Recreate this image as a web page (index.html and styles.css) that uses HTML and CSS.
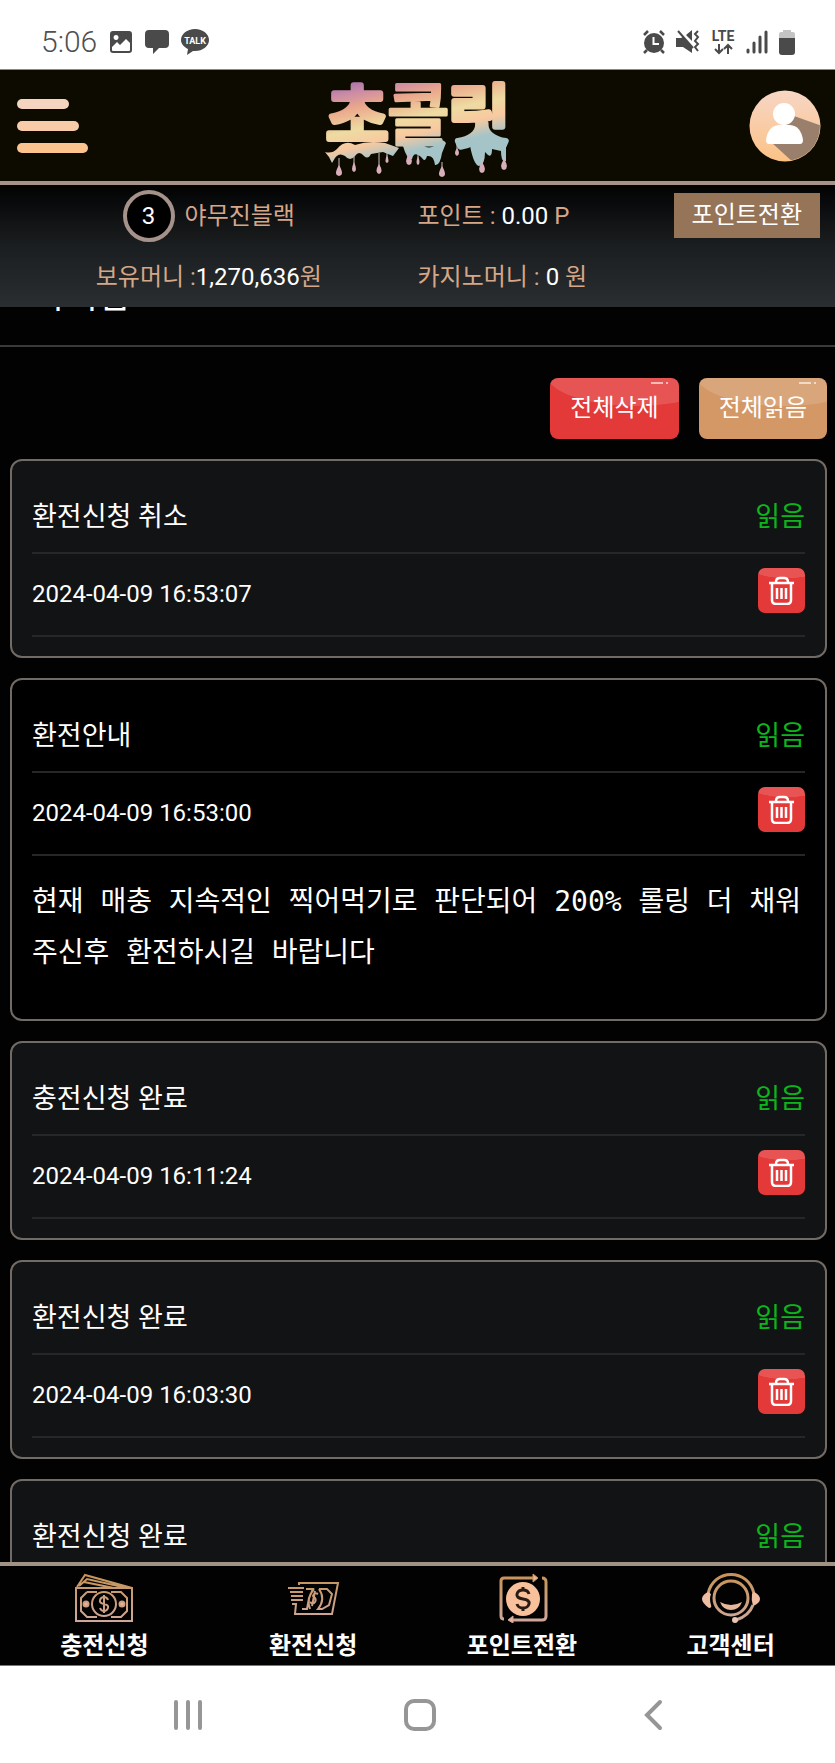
FILE: index.html
```
<!DOCTYPE html>
<html lang="ko">
<head>
  <meta charset="UTF-8" />
  <meta name="viewport" content="width=device-width, initial-scale=1" />
  <title>쪽지함</title>
  <link rel="stylesheet" href="styles.css">
</head>
<body>

  <div class="status">
    <div class="status-left">
      <span class="clock">5:06</span>
      <svg width="24" height="24" viewBox="0 0 24 24"><path fill="#4a4a4a" fill-rule="evenodd" d="M4 1h16a3 3 0 0 1 3 3v16a3 3 0 0 1-3 3H4a3 3 0 0 1-3-3V4a3 3 0 0 1 3-3zM3 17v3q0 1 1 1h16q1 0 1-1v-7l-4-4-6 6-3-3zM7 5a2.500 2.500 0 1 0 .1 0z"/></svg>
      <svg width="24" height="24" viewBox="0 0 24 24"><path fill="#4a4a4a" d="M4 0h16q4 0 4 4v10q0 4-4 4h-6l-6 6v-6H4q-4 0-4-4V4q0-4 4-4z"/></svg>
      <svg width="28" height="26" viewBox="0 0 28 26"><path fill="#4a4a4a" d="M14 0c8 0 14 5 14 11s-6 11-14 11h-2l-6 4 1-6C3 18 0 15 0 11 0 5 6 0 14 0z"/><text class="talk" x="14" y="15" text-anchor="middle">TALK</text></svg>
    </div>
    <div class="status-right">
      <svg width="24" height="24" viewBox="0 0 24 24"><circle cx="12" cy="13" r="10" fill="#4a4a4a"/><path d="M2 5l4-4M22 5l-4-4M5 20l-3 3M19 20l3 3" stroke="#4a4a4a" stroke-width="2.500"/><path d="M11.500 7v7H17" fill="none" stroke="#fff" stroke-width="2"/></svg>
      <svg width="24" height="24" viewBox="0 0 24 24"><path fill="#4a4a4a" d="M0 8h5l2-1 9 9v7l-9-6H0zM10 5l6-5v11z"/><path d="M2 1l15 17" stroke="#4a4a4a" stroke-width="2"/><path d="M22 1l-3 3 3 3-3 4 3 3-3 3 3 4" fill="none" stroke="#4a4a4a" stroke-width="2"/></svg>
      <svg width="26" height="26" viewBox="0 0 26 26"><text class="lte" x="13" y="12" text-anchor="middle">LTE</text><path d="M9 15v9M5 20l4 4 4-4M18 25v-9M14 20l4-4 4 4" fill="none" stroke="#4a4a4a" stroke-width="2"/></svg>
      <svg width="22" height="24" viewBox="0 0 22 24"><path d="M2 20v2M8 13v9M14 7v15M20 2v20" stroke="#4a4a4a" stroke-width="3" stroke-linecap="round"/></svg>
      <svg width="18" height="26" viewBox="0 0 18 26"><path fill="#c4c4c4" d="M5 1h8v2h2q2 0 2 2v5H1V5q0-2 2-2h2z"/><path fill="#4a4a4a" d="M1 9h16v14q0 3-3 3H4q-3 0-3-3z"/></svg>
    </div>
  </div>

  <header class="header">
    <button class="menu" aria-label="메뉴">
      <span class="bar bar-short"></span>
      <span class="bar bar-mid"></span>
      <span class="bar bar-long"></span>
    </button>
    <svg class="logo" width="188" height="104" viewBox="0 0 188 104">
      <defs>
        <linearGradient id="melt" x1="0" y1="0" x2="20" y2="92" gradientUnits="userSpaceOnUse">
          <stop offset="0.05" stop-color="#8b62ae"/>
          <stop offset="0.25" stop-color="#c98aa6"/>
          <stop offset="0.42" stop-color="#eba88c"/>
          <stop offset="0.65" stop-color="#eedba2"/>
          <stop offset="0.82" stop-color="#f8c9a0"/>
          <stop offset="1" stop-color="#a5c4c8"/>
        </linearGradient>
      </defs>
      <!-- melted edge under the word -->
      <path fill="url(#melt)" d="M0 78q7 2 12-3 8-10 18-4 14-5 30-2l14 5-6 8-10-4-12 2q-3 6-7 2-5-6-9 0-5 6-10 0-6-4-10 2l-3 5-3-6zM78 72q5-8 15-7 8 14 19 5 5-7 9-1l-4 10q-2 13-7 12-1-10-8-9-2 7-5 2-8-8-10 1-5 1-9-13zM144 66q8-6 16 0l20-1q4 3 1 8v14q-5 2-5-10l-9-2q0 9-4 6l-3-3q0 13-6 14-6-1-10-26z"/>
      <g class="logo-text">
        <text x="1" y="67">초</text>
        <text class="logo-dense" x="62" y="66">콜</text>
        <text x="123" y="67">릿</text>
      </g>
      <path d="M14 84v11M29 80v12M54 79v14M62 79v5M83 75v10M93 80v6M117 88v10M132 70v7M157 84v9M179 82v7" stroke="#cbbfc2"/>
      <path fill="#d7aeb9" d="M14 91q6 10 0 11-6-1 0-11zM29 88q4 9 0 10-4-1 0-10zM54 90q5 8 0 10-5-2 0-10zM62 81q3 7 0 8-3-1 0-8zM84 80q6 9 0 11-6-2 0-11zM93 82q3 8 0 9-3-1 0-9zM117 92q6 10 0 11-6-1 0-11zM132 74q4 6 0 8-4-2 0-8zM157 88q6 9 0 11-6-2 0-11zM179 85q6 9 0 11-6-2 0-11z"/>
    </svg>
    <button class="profile" aria-label="내 정보">
      <svg width="72" height="72" viewBox="0 0 72 72">
        <defs>
          <linearGradient id="skin" x1="0" y1="0" x2="0" y2="1"><stop offset="0" stop-color="#f7d6c5"/><stop offset="1" stop-color="#fbc286"/></linearGradient>
          <clipPath id="disc"><circle cx="36" cy="36" r="35"/></clipPath>
        </defs>
        <circle cx="36" cy="36" r="35.500" fill="url(#skin)"/>
        <path clip-path="url(#disc)" fill="#9b7f6d" d="M45 26l28 10v38H46L22 52z"/>
        <circle cx="35" cy="24" r="11" fill="#fff"/>
        <path fill="#fff" d="M17 50q2-14 13-15h11q11 1 13 15 0 4-3 4H20q-3 0-3-4z"/>
      </svg>
    </button>
  </header>

  <section class="wallet">
    <div class="wallet-cell wallet-center"><span class="level">3</span><span class="wallet-text">야무진블랙</span></div>
    <div class="wallet-cell wallet-split">
      <span class="wallet-text">포인트 : <b>0.00</b> P</span>
      <button class="convert">포인트전환</button>
    </div>
    <div class="wallet-cell wallet-center"><span class="wallet-text">보유머니 :<b>1,270,636</b>원</span></div>
    <div class="wallet-cell"><span class="wallet-text">카지노머니 : <b>0</b> 원</span></div>
  </section>

  <main class="inbox">
    <h1 class="inbox-title">쪽지함</h1>
    <div class="actions">
      <button class="button delete">전체삭제</button>
      <button class="button read">전체읽음</button>
    </div>

    <article class="card">
      <div class="card-head"><h2>환전신청 취소</h2><span class="state">읽음</span></div>
      <div class="card-date">
        <time>2024-04-09 16:53:07</time>
        <button class="trash" aria-label="삭제"><svg width="27" height="29" viewBox="0 0 27 29"><use href="#bin"/></svg></button>
      </div>
    </article>

    <article class="card open">
      <div class="card-head"><h2>환전안내</h2><span class="state">읽음</span></div>
      <div class="card-date">
        <time>2024-04-09 16:53:00</time>
        <button class="trash" aria-label="삭제"><svg width="27" height="29" viewBox="0 0 27 29"><use href="#bin"/></svg></button>
      </div>
      <p class="card-text">현재 매충 지속적인 찍어먹기로 판단되어 200% 롤링 더 채워주신후 환전하시길 바랍니다</p>
    </article>

    <article class="card">
      <div class="card-head"><h2>충전신청 완료</h2><span class="state">읽음</span></div>
      <div class="card-date">
        <time>2024-04-09 16:11:24</time>
        <button class="trash" aria-label="삭제"><svg width="27" height="29" viewBox="0 0 27 29"><use href="#bin"/></svg></button>
      </div>
    </article>

    <article class="card">
      <div class="card-head"><h2>환전신청 완료</h2><span class="state">읽음</span></div>
      <div class="card-date">
        <time>2024-04-09 16:03:30</time>
        <button class="trash" aria-label="삭제"><svg width="27" height="29" viewBox="0 0 27 29"><use href="#bin"/></svg></button>
      </div>
    </article>

    <article class="card">
      <div class="card-head"><h2>환전신청 완료</h2><span class="state">읽음</span></div>
    </article>
  </main>

  <nav class="tabs">
    <a class="tab" href="#">
      <svg width="60" height="50" viewBox="0 0 60 50" fill="none" stroke="url(#gold)" stroke-width="2">
        <path d="M2 15h56v33H2zM3 14l8-12 47 13M5 13l8-7 40 9M10 9l30 6"/>
        <path d="M13 19h10M37 19h10l6 6v13l-6 6H37M23 44H13l-6-6V25l6-6"/>
        <circle cx="30" cy="31" r="12"/>
        <circle cx="12" cy="31" r="2.500" fill="#e8b698"/><circle cx="48" cy="31" r="2.500" fill="#e8b698"/>
        <path d="M34 27q-1-3-4-3t-4 3 4 4 4 4-4 3-4-3M30 22v18"/>
      </svg>
      <span>충전신청</span>
    </a>
    <a class="tab" href="#">
      <svg width="60" height="50" viewBox="0 0 60 50" fill="none" stroke="url(#gold)" stroke-width="2">
        <path d="M16 12V10h39l-6 31H12l1-10H9M5 15h16M7 19h13M8 23h12M8 27h12"/>
        <path d="M23 16h7l-4 9-2 11h-5M36 16h8l5 5-3 11-7 4h-4q8-10 1-20M31 16q-8 9-4 20"/>
        <path d="M35 21q-4-2-5 2 4 3 2 6-2 3-5 0M32 18l-3 15"/>
      </svg>
      <span>환전신청</span>
    </a>
    <a class="tab" href="#">
      <svg width="60" height="50" viewBox="0 0 60 50" fill="none" stroke="url(#gold)" stroke-width="3">
        <path d="M12 46q-3 0-3-3V8q0-3 3-3h30M50 5q4 0 4 4v34q0 4-4 4H21"/>
        <path d="M41 1l5 4-5 4zM21 43l-5 4 5 3z" fill="#e8b698" stroke-width="1"/>
        <circle cx="31" cy="26" r="17" fill="#f8c09b" stroke="none"/>
        <path d="M37 21q-1-4-6-4t-6 4 6 5 6 5-6 4-6-4M31 14v3M31 35v3" stroke="#2a1c14"/>
      </svg>
      <span>포인트전환</span>
    </a>
    <a class="tab" href="#">
      <svg width="60" height="50" viewBox="0 0 60 50" fill="none" stroke="url(#gold)" stroke-width="2">
        <circle cx="30" cy="25" r="17" stroke-width="3"/>
        <path d="M7 21C12-5 48-5 53 21M52 32q-4 11-17 15" stroke-width="3"/>
        <path d="M7 19q-6 3-6 7t7 9q3 0 2-3-2-6 0-11zM53 19q6 3 6 7t-7 7q-2-6-1-12z" fill="#efbda2" stroke="none"/>
        <path d="M19 29q11 6 22 0-3 8-11 8t-11-8z" fill="#e8b698" stroke="none"/>
        <circle cx="34" cy="47" r="3" fill="#e8c6b2" stroke="none"/>
      </svg>
      <span>고객센터</span>
    </a>
  </nav>

  <div class="system">
    <svg width="30" height="32" viewBox="0 0 30 32"><path d="M3 3v26M15 3v26M27 3v26" stroke="#969696" stroke-width="4" stroke-linecap="round"/></svg>
    <svg width="34" height="34" viewBox="0 0 34 34"><rect x="3" y="3" width="28" height="28" rx="8" fill="none" stroke="#969696" stroke-width="4"/></svg>
    <svg width="20" height="32" viewBox="0 0 20 32"><path d="M17 3L4 16l13 13" fill="none" stroke="#969696" stroke-width="4" stroke-linecap="round"/></svg>
  </div>

  <!-- shared shapes -->
  <svg class="shared" width="0" height="0" aria-hidden="true">
    <defs>
      <linearGradient id="gold" x1="0" y1="0" x2="0" y2="50" gradientUnits="userSpaceOnUse">
        <stop offset="0" stop-color="#c69355"/>
        <stop offset="1" stop-color="#cfa89d"/>
      </linearGradient>
      <g id="bin" fill="none" stroke="#fff" stroke-width="2.500">
        <path d="M1 7h25M8 6q0-4 4-4h4q4 0 4 4"/>
        <path d="M4 7v17q0 4 4 4h11q4 0 4-4V7"/>
        <path d="M9 12v11M13.500 12v11M18 12v11"/>
      </g>
    </defs>
  </svg>

</body>
</html>
```

FILE: styles.css
```
* {
  margin: 0;
  padding: 0;
  box-sizing: border-box;
}

body {
  display: flex;
  flex-direction: column;
  height: 100vh;
  overflow: hidden;
  background: #020202;
  color: #fff;
  font-family: Roboto, "Noto Sans CJK KR", sans-serif;
  font-size: 24px;
}

button {
  border: none;
  color: #fff;
  font: inherit;
  cursor: pointer;
}

svg {
  display: block;
  flex: none;
}

/* phone status bar */
.status {
  flex: none;
  height: 70px;
  padding: 14px 39px 0 41px;
  display: flex;
  justify-content: space-between;
  align-items: center;
  background: #fff;
  border-bottom: 1px solid #8c8a86;
}

.status-left,
.status-right {
  display: flex;
  align-items: center;
}

.status-left {
  gap: 12px;
}

.status-right {
  gap: 10px;
}

.clock {
  color: #505050;
  font-size: 30px;
  font-weight: 300;
}

.talk {
  fill: #fff;
  font-size: 9px;
  font-weight: bold;
}

.lte {
  fill: #4a4a4a;
  font-size: 14px;
  font-weight: bold;
}

/* site header */
.header {
  flex: none;
  height: 115px;
  padding: 0 14px 0 17px;
  display: grid;
  grid-template-columns: 1fr auto 1fr;
  align-items: center;
  background: #0d0b00;
  border-bottom: 4px solid #a4928b;
}

.menu {
  justify-self: start;
  display: flex;
  flex-direction: column;
  gap: 12px;
  background: none;
}

.bar {
  height: 10px;
  border-radius: 5px;
}

.bar-short {
  width: 52px;
  background: #f5d5c0;
}

.bar-mid {
  width: 62px;
  background: #f8cca8;
}

.bar-long {
  width: 71px;
  background: #fbc48f;
}

.logo {
  overflow: visible;
}

.logo-text {
  fill: url(#melt);
  stroke: url(#melt);
  stroke-width: 6px;
  stroke-linejoin: round;
  font-family: "Noto Sans CJK KR", sans-serif;
  font-size: 68px;
  font-weight: 500;
}

.logo-dense {
  stroke-width: 3px;
}

.profile {
  justify-self: end;
  border-radius: 50%;
  background: none;
}

/* balance panel */
.wallet {
  flex: none;
  height: 122px;
  display: grid;
  grid-template-columns: 1fr 1fr;
  grid-template-rows: 61px 61px;
  background: linear-gradient(#020203, #1b1e20 50%, #2a2e30);
  color: #d5a688;
}

.wallet-cell {
  display: flex;
  align-items: center;
}

.wallet-text {
  padding-bottom: 4px;
}

.wallet-center {
  justify-content: center;
  gap: 10px;
}

.wallet-split {
  justify-content: space-between;
  padding-right: 15px;
}

.wallet b {
  color: #fff;
  font-weight: normal;
}

.level {
  width: 52px;
  height: 52px;
  border: 4px solid #a4928b;
  border-radius: 50%;
  background: #000;
  color: #fff;
  line-height: 44px;
  text-align: center;
}

.convert {
  height: 45px;
  padding: 0 18px;
  background: #967458;
  line-height: 45px;
}

/* message list */
.inbox {
  flex: 1;
  min-height: 0;
  overflow: hidden;
}

.inbox-title {
  margin-top: -38px;
  padding: 0 32px 22px;
  border-bottom: 2px solid #3a3a3a;
  font-size: 36px;
  font-weight: normal;
  line-height: 54px;
}

.actions {
  display: flex;
  justify-content: flex-end;
  gap: 20px;
  padding: 31px 8px 20px;
}

.button {
  position: relative;
  height: 61px;
  padding: 0 20px;
  border-radius: 8px;
  overflow: hidden;
  line-height: 59px;
}

.button::before {
  content: "";
  position: absolute;
  top: -40px;
  left: -5px;
  width: 180px;
  height: 68px;
  border-radius: 50%;
  background: rgba(255, 255, 255, 0.14);
}

.button::after {
  content: "";
  position: absolute;
  top: 4px;
  right: 11px;
  width: 17px;
  height: 2px;
  background: linear-gradient(90deg, rgba(255, 255, 255, 0.6) 12px, transparent 12px 15px, rgba(255, 255, 255, 0.6) 15px);
}

.delete {
  background: #e33939;
}

.read {
  background: #d39866;
}

.card {
  margin: 0 8px 20px 10px;
  padding: 19px 20px;
  border: 2px solid #716a65;
  border-radius: 12px;
  background: #111315;
}

.open {
  background: #000;
}

.card-head {
  height: 74px;
  padding-bottom: 4px;
  display: flex;
  justify-content: space-between;
  align-items: center;
  border-bottom: 2px solid #262727;
  font-size: 27px;
}

.card-head h2 {
  font-size: 27px;
  font-weight: normal;
}

.state {
  color: #0cb51b;
}

.card-date {
  height: 83px;
  padding-top: 14px;
  display: flex;
  justify-content: space-between;
  align-items: flex-start;
  border-bottom: 2px solid #262727;
  line-height: 52px;
}

.trash {
  width: 47px;
  height: 45px;
  display: flex;
  justify-content: center;
  align-items: center;
  border-radius: 7px;
  background: radial-gradient(ellipse 48px 20px at 60% -8px, #e85353 90%, #e33939 92%);
}

.card-text {
  padding: 20px 0 22px;
  font-family: "DejaVu Sans Mono", "Noto Sans CJK KR", monospace;
  font-size: 28px;
  line-height: 51px;
}

/* bottom menu */
.tabs {
  flex: none;
  height: 104px;
  display: grid;
  grid-template-columns: repeat(4, 1fr);
  border-top: 4px solid #a09285;
  border-bottom: 1px solid #777;
  background: #020202;
}

.tab {
  padding-top: 7px;
  display: flex;
  flex-direction: column;
  align-items: center;
  gap: 5px;
  color: #fff;
  font-weight: bold;
  line-height: 36px;
  text-decoration: none;
}

.system {
  flex: none;
  height: 97px;
  padding-left: 6px;
  display: grid;
  grid-template-columns: repeat(3, 28%);
  justify-content: center;
  justify-items: center;
  align-items: center;
  background: #fff;
}

.shared {
  position: absolute;
}
```
